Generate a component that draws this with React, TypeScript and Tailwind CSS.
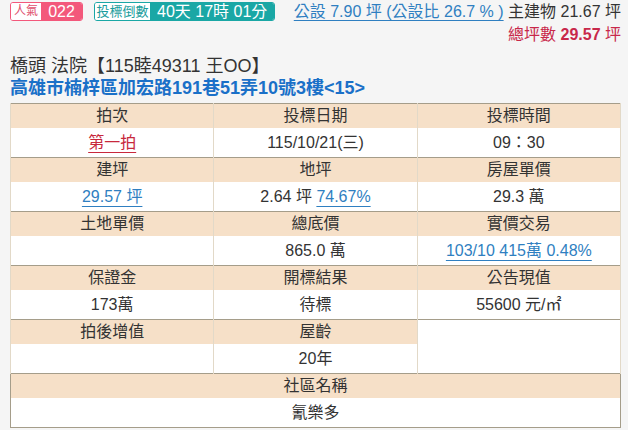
import React from "react";

const FONT = "font-['Liberation_Sans','Noto_Sans_CJK_TC',sans-serif]";

// header row + value row pairs
const rows: { heads: string[]; vals: React.ReactNode[] }[] = [
  {
    heads: ["拍次", "投標日期", "投標時間"],
    vals: [
      <span className="text-[#c8283c] underline underline-offset-[4px] decoration-[#c8283c]">第一拍</span>,
      "115/10/21(三)",
      "09：30",
    ],
  },
  {
    heads: ["建坪", "地坪", "房屋單價"],
    vals: [
      <span className="text-[#2f7fc1] underline underline-offset-[4px]">29.57 坪</span>,
      <span>
        2.64 坪 <span className="text-[#2f7fc1] underline underline-offset-[4px]">74.67%</span>
      </span>,
      "29.3 萬",
    ],
  },
  {
    heads: ["土地單價", "總底價", "實價交易"],
    vals: [
      "",
      "865.0 萬",
      <span className="text-[#2f7fc1] underline underline-offset-[4px]">103/10 415萬 0.48%</span>,
    ],
  },
  {
    heads: ["保證金", "開標結果", "公告現值"],
    vals: ["173萬", "待標", "55600 元/㎡"],
  },
];

export default function App() {
  return (
    <div className={`w-[628px] h-[430px] overflow-hidden bg-[#f5f5f5] text-[#333] ${FONT}`}>
      {/* top bar */}
      <div className="flex justify-between pl-[10px] pr-[7px] pt-[2px]">
        <div className="flex gap-[11px]">
          <div className="flex h-[19px] border border-[#f3587b] rounded-[3px] overflow-hidden">
            <span className="w-[30px] bg-white text-[#e0506e] text-[12px] leading-[17px] text-center">人氣</span>
            <span className="w-[41px] bg-[#f3587b] text-white text-[16px] leading-[17px] text-center">022</span>
          </div>
          <div className="flex h-[19px] border border-[#1aa7a5] rounded-[3px] overflow-hidden">
            <span className="w-[55px] bg-white text-[#1a9c9c] text-[13px] leading-[17px] text-center">投標倒數</span>
            <span className="bg-[#1aa7a5] text-white text-[16px] leading-[17px] px-[7px]">40天 17時 01分</span>
          </div>
        </div>
        <div className="text-right text-[16px] leading-[19px]">
          <div>
            <span className="text-[#2f7fc1] underline underline-offset-[3px]">公設 7.90 坪 (公設比 26.7 % )</span>{" "}
            主建物 21.67 坪
          </div>
          <div className="text-[#c8284a] mt-[4px]">
            總坪數 <b>29.57</b> 坪
          </div>
        </div>
      </div>

      {/* title */}
      <div className="pl-[10px] mt-[11px]">
        <div className="text-[18px] leading-[22px]">橋頭 法院【115睦49311 王OO】</div>
        <div className="text-[18px] leading-[22px] font-bold text-[#1a70c8]">高雄市楠梓區加宏路191巷51弄10號3樓&lt;15&gt;</div>
      </div>

      {/* info table */}
      <table className="ml-[10px] mt-[4px] w-[611px] table-fixed border-collapse border border-[#a59d8a] text-[16px] text-center">
        <tbody>
          {rows.map((r, i) => (
            <React.Fragment key={i}>
              <tr className="h-[24px] bg-[#f6e0c8]">
                {r.heads.map((h) => (
                  <td key={h} className="border-x border-[#e2d9c8] p-0 leading-[24px]">{h}</td>
                ))}
              </tr>
              <tr className="h-[29px] bg-white border-b border-[#a59d8a]">
                {r.vals.map((v, j) => (
                  <td key={j} className="border-x border-[#e2d9c8] p-0 leading-[29px]">{v}</td>
                ))}
              </tr>
            </React.Fragment>
          ))}
          <tr className="h-[24px] bg-[#f6e0c8]">
            <td className="border-x border-[#e2d9c8] p-0 leading-[24px]">拍後增值</td>
            <td className="border-x border-[#e2d9c8] p-0 leading-[24px]">屋齡</td>
            <td rowSpan={2} className="bg-white border-x border-[#e2d9c8] p-0"></td>
          </tr>
          <tr className="h-[29px] bg-white border-b border-[#a59d8a]">
            <td className="border-x border-[#e2d9c8] p-0 leading-[29px]"></td>
            <td className="border-x border-[#e2d9c8] p-0 leading-[29px]">20年</td>
          </tr>
          <tr className="h-[24px] bg-[#f6e0c8]">
            <td colSpan={3} className="p-0 leading-[24px]">社區名稱</td>
          </tr>
          <tr className="h-[29px] bg-white">
            <td colSpan={3} className="p-0 leading-[29px]">氰樂多</td>
          </tr>
        </tbody>
      </table>
    </div>
  );
}
